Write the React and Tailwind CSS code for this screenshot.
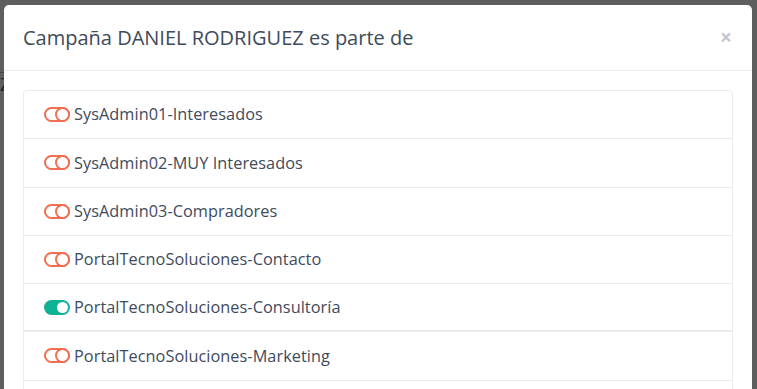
import React from "react";

const items = [
  { label: "SysAdmin01-Interesados", on: false },
  { label: "SysAdmin02-MUY Interesados", on: false },
  { label: "SysAdmin03-Compradores", on: false },
  { label: "PortalTecnoSoluciones-Contacto", on: false },
  { label: "PortalTecnoSoluciones-Consultoría", on: true },
  { label: "PortalTecnoSoluciones-Marketing", on: false },
  { label: "PortalTecnoSoluciones-Ventas", on: false },
];

function Toggle({ on }) {
  if (on) {
    return (
      <span className="flex h-[15px] w-[26px] shrink-0 items-center justify-end rounded-full bg-[#0fb295] pr-[2px]">
        <span className="h-[11px] w-[11px] rounded-full bg-white" />
      </span>
    );
  }
  return (
    <span className="flex h-[15px] w-[26px] shrink-0 items-center justify-end rounded-full border-2 border-[#f36d50] bg-white">
      <span className="-mr-[2px] h-[15px] w-[15px] rounded-full border-2 border-[#f36d50] bg-white" />
    </span>
  );
}

export default function App() {
  return (
    <div
      className="flex h-[389px] w-[757px] overflow-hidden bg-[#5e5e5e]"
      style={{ fontFamily: '"Open Sans", sans-serif' }}
    >
      <div className="flex w-[4px] shrink-0 flex-col pt-[72px]">
        <div className="h-px w-[4px] bg-[#444]" />
        <div className="mt-[2px] text-[18px] leading-none text-[#222]">Z</div>
      </div>
      <div className="mt-[5px] h-[420px] w-[748px] shrink-0 rounded-[5px] bg-white">
        <div className="flex h-[66px] items-center justify-between border-b border-[#e9ecef] pl-[19px] pr-[20px]">
          <h4 className="text-[20px] font-normal leading-none text-[#3e4b5b]">
            Campaña DANIEL RODRIGUEZ es parte de
          </h4>
          <span className="text-[21px] font-bold leading-none text-[#c5c9cf]">×</span>
        </div>
        <div className="px-[19px] pt-[19px]">
          <div className="rounded-[4px] border border-[#e9ecef]">
            {items.map((it, i) => (
              <div
                key={i}
                className={`flex h-[48.25px] items-center gap-[4px] pl-[20px] ${
                  i < items.length - 1 ? (it.on ? "border-b-2" : "border-b") : ""
                } border-[#e9ecef]`}
              >
                <Toggle on={it.on} />
                <span className="text-[16.3px] tracking-[0.05px] text-[#3e4b5b]">{it.label}</span>
              </div>
            ))}
          </div>
        </div>
      </div>
    </div>
  );
}
